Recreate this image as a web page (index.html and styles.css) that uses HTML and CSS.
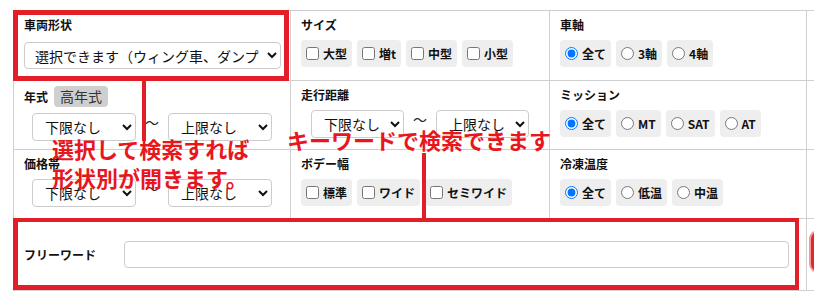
FILE: index.html
```html
<!DOCTYPE html>
<html lang="ja">
<head>
<meta charset="utf-8">
<title>検索</title>
<link rel="stylesheet" href="styles.css">
</head>
<body>
<div class="page">
  <div class="grid">
    <div class="cell">
      <div class="label">車両形状</div>
      <select class="sel sel-wide"><option>選択できます（ウィング車、ダンプカー、冷凍車など）</option></select>
    </div>
    <div class="cell">
      <div class="label">サイズ</div>
      <div class="chips">
        <label class="chip"><input type="checkbox"><span>大型</span></label>
        <label class="chip"><input type="checkbox"><span>増t</span></label>
        <label class="chip"><input type="checkbox"><span>中型</span></label>
        <label class="chip"><input type="checkbox"><span>小型</span></label>
      </div>
    </div>
    <div class="cell">
      <div class="label">車軸</div>
      <div class="chips">
        <label class="chip"><input type="radio" name="axle" checked><span>全て</span></label>
        <label class="chip"><input type="radio" name="axle"><span>3軸</span></label>
        <label class="chip"><input type="radio" name="axle"><span>4軸</span></label>
      </div>
    </div>
    <div class="cell extra"></div>

    <div class="cell">
      <div class="label-row"><span class="label">年式</span><span class="badge">高年式</span></div>
      <div class="range">
        <select class="sel sel-r1"><option>下限なし</option></select>
        <span class="tilde">～</span>
        <select class="sel sel-r1"><option>上限なし</option></select>
      </div>
    </div>
    <div class="cell">
      <div class="label">走行距離</div>
      <div class="range">
        <select class="sel sel-r2"><option>下限なし</option></select>
        <span class="tilde">～</span>
        <select class="sel sel-r2"><option>上限なし</option></select>
      </div>
    </div>
    <div class="cell">
      <div class="label">ミッション</div>
      <div class="chips">
        <label class="chip"><input type="radio" name="mission" checked><span>全て</span></label>
        <label class="chip"><input type="radio" name="mission"><span>MT</span></label>
        <label class="chip"><input type="radio" name="mission"><span>SAT</span></label>
        <label class="chip"><input type="radio" name="mission"><span>AT</span></label>
      </div>
    </div>
    <div class="cell extra"></div>

    <div class="cell">
      <div class="label">価格帯</div>
      <div class="range">
        <select class="sel sel-r1"><option>下限なし</option></select>
        <span class="tilde">～</span>
        <select class="sel sel-r1"><option>上限なし</option></select>
      </div>
    </div>
    <div class="cell">
      <div class="label">ボデー幅</div>
      <div class="chips">
        <label class="chip"><input type="checkbox"><span>標準</span></label>
        <label class="chip"><input type="checkbox"><span>ワイド</span></label>
        <label class="chip"><input type="checkbox"><span>セミワイド</span></label>
      </div>
    </div>
    <div class="cell">
      <div class="label">冷凍温度</div>
      <div class="chips">
        <label class="chip"><input type="radio" name="temp" checked><span>全て</span></label>
        <label class="chip"><input type="radio" name="temp"><span>低温</span></label>
        <label class="chip"><input type="radio" name="temp"><span>中温</span></label>
      </div>
    </div>
    <div class="cell extra"></div>

    <div class="cell free">
      <span class="label free-label">フリーワード</span>
      <input class="free-input" type="text">
    </div>
    <div class="cell extra"><button class="search-btn" type="button" aria-label="検索"></button></div>
  </div>

  <div class="note-box box-top"></div>
  <div class="note-line line-1"></div>
  <div class="note-text text-1">選択して検索すれば<br>形状別が開きます。</div>
  <div class="note-text text-2">キーワードで検索できます</div>
  <div class="note-line line-2"></div>
  <div class="note-box box-bottom"></div>
</div>
</body>
</html>
```

FILE: styles.css
```css
html, body {
  margin: 0;
  padding: 0;
  background: #fff;
  overflow: hidden;
}
body {
  font-family: "Noto Sans CJK JP", "Noto Sans", sans-serif;
  color: #111;
}
.page {
  position: relative;
  width: 814px;
  height: 305px;
  padding: 10px 0 0 13px;
  box-sizing: border-box;
}
.grid {
  display: grid;
  grid-template-columns: 277px 259px 257px 120px;
  grid-template-rows: 70px 69px 69px 72px;
  border-top: 1px solid #cfcfcf;
  border-left: 1px solid #cfcfcf;
  width: max-content;
}
.cell {
  box-sizing: border-box;
  border-right: 1px solid #cfcfcf;
  border-bottom: 1px solid #cfcfcf;
  padding: 5px 10px 0 10px;
  display: flex;
  flex-direction: column;
}
.label {
  font-size: 12px;
  font-weight: 700;
  line-height: 18px;
  height: 18px;
  white-space: nowrap;
}
.label-row {
  display: flex;
  align-items: center;
  gap: 6px;
}
.badge {
  background: #cfcfcf;
  color: #333;
  font-size: 14px;
  line-height: 21px;
  height: 21px;
  padding: 0 6px;
  border-radius: 4px;
}
.chips {
  display: flex;
  gap: 5px;
  margin-top: 6px;
}
.chip {
  display: inline-flex;
  align-items: center;
  height: 27px;
  padding: 0 5px;
  background: #eeeeee;
  border-radius: 4px;
  font-size: 12px;
  font-weight: 700;
  white-space: nowrap;
}
.chip input {
  margin: 0 4px 0 0;
  width: 13px;
  height: 13px;
}
.sel {
  height: 28px;
  box-sizing: border-box;
  border: 1px solid #cccccc;
  border-radius: 4px;
  background: #fff;
  font-family: "Noto Sans CJK JP", sans-serif;
  font-size: 14px;
  color: #111;
  padding: 0 4px 0 6px;
}
.sel-wide {
  width: 257px;
  height: 27px;
  margin-top: 8px;
}
.range {
  display: flex;
  justify-content: center;
  gap: 9px;
  margin-top: 6px;
}
.sel-r1 { width: 104px; padding-left: 8px; }
.sel-r2 { width: 93px; padding-left: 8px; }
.tilde {
  font-size: 14px;
  line-height: 18px;
  color: #222;
  width: 14px;
}
.free {
  grid-column: span 3;
  flex-direction: row;
  align-items: center;
  padding: 0 17px 0 10px;
}
.free-label {
  width: 100px;
  flex: none;
}
.free-input {
  flex: 1;
  height: 27px;
  box-sizing: border-box;
  border: 1px solid #cccccc;
  border-radius: 4px;
  margin: 0;
}
.extra {
  padding: 0;
}
.search-btn {
  margin: 11px 0 0 2px;
  width: 110px;
  height: 43px;
  background: #e4262c;
  border: 2px solid #f39a9a;
  border-radius: 9px;
}
.note-box {
  position: absolute;
  box-sizing: border-box;
  border: 5px solid #e21e26;
}
.box-top {
  left: 13px;
  top: 10px;
  width: 276px;
  height: 71px;
}
.box-bottom {
  left: 13px;
  top: 218px;
  width: 786px;
  height: 72px;
  border-width: 4px 4px 5px 5px;
}
.note-line {
  position: absolute;
  background: #e21e26;
  width: 4px;
}
.line-1 {
  left: 142px;
  top: 81px;
  height: 60px;
}
.line-2 {
  left: 422px;
  top: 153px;
  height: 65px;
}
.note-text {
  position: absolute;
  color: #e8161d;
  font-size: 22px;
  font-weight: 700;
  line-height: 29px;
  white-space: nowrap;
}
.text-1 {
  left: 52px;
  top: 134px;
}
.text-2 {
  left: 287px;
  top: 125px;
}
```
